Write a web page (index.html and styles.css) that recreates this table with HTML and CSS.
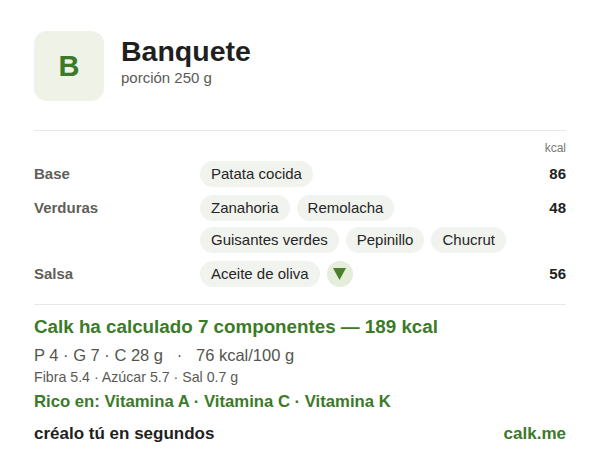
FILE: index.html
```html
<!DOCTYPE html>
<html lang="es">
<head>
    <meta charset="UTF-8">
    <meta name="viewport" content="width=device-width, initial-scale=1.0">
    <title>Banquete - Calk</title>
    <link rel="stylesheet" href="styles.css">
</head>
<body>
    <div class="card">
        <!-- Header -->
        <div class="header">
            <div class="logo">B</div>
            <div class="title-block">
                <h1>Banquete</h1>
                <div class="portion">porción 250 g</div>
            </div>
        </div>

        <!-- Components -->
        <div class="components">
            <div class="kcal-head">kcal</div>

            <div class="row">
                <div class="label">Base</div>
                <div class="chips">
                    <span class="chip">Patata cocida</span>
                </div>
                <div class="kcal">86</div>
            </div>

            <div class="row">
                <div class="label">Verduras</div>
                <div class="chips">
                    <span class="chip">Zanahoria</span>
                    <span class="chip">Remolacha</span>
                    <span class="chip">Guisantes verdes</span>
                    <span class="chip">Pepinillo</span>
                    <span class="chip">Chucrut</span>
                </div>
                <div class="kcal">48</div>
            </div>

            <div class="row">
                <div class="label">Salsa</div>
                <div class="chips">
                    <span class="chip">Aceite de oliva</span>
                    <span class="toggle">
                        <svg width="13" height="12" viewBox="0 0 13 12"><path d="M0 0 L13 0 L6.5 12 Z" fill="#4b7f2c"/></svg>
                    </span>
                </div>
                <div class="kcal">56</div>
            </div>
        </div>

        <!-- Summary -->
        <div class="summary">
            <div class="total">Calk ha calculado 7 componentes — 189 kcal</div>
            <div class="macros">P 4 · G 7 · C 28 g &nbsp; · &nbsp; 76 kcal/100 g</div>
            <div class="extra">Fibra 5.4 · Azúcar 5.7 · Sal 0.7 g</div>
            <div class="rich">Rico en: Vitamina A · Vitamina C · Vitamina K</div>
        </div>

        <div class="footer">
            <span class="cta">créalo tú en segundos</span>
            <span class="brand">calk.me</span>
        </div>
    </div>
</body>
</html>
```

FILE: styles.css
```css
body {
    font-family: "Liberation Sans", Arial, sans-serif;
    background-color: #fff;
    color: #222;
    margin: 0;
    padding: 0;
}
.card {
    width: 532px;
    padding: 31px 34px 0;
}
.header {
    display: flex;
    align-items: center;
    gap: 17px;
    padding-bottom: 29px;
    border-bottom: 1px solid #e8e8e6;
}
.logo {
    width: 70px;
    height: 70px;
    border-radius: 13px;
    background-color: #eef2e7;
    color: #3b7a28;
    font-size: 29px;
    font-weight: bold;
    display: flex;
    align-items: center;
    justify-content: center;
}
.title-block {
    margin-top: -10px;
}
h1 {
    font-size: 28.5px;
    margin: 0;
    line-height: 32px;
    color: #1f1f1f;
}
.portion {
    font-size: 15px;
    color: #5a5a55;
    margin-top: 2px;
    line-height: 18px;
}
.components {
    padding: 10px 0 17px;
    border-bottom: 1px solid #e8e8e6;
}
.kcal-head {
    text-align: right;
    font-size: 12px;
    color: #777;
    line-height: 14px;
    margin-bottom: 6px;
}
.row {
    display: grid;
    grid-template-columns: 166px 1fr 50px;
    align-items: start;
    margin-bottom: 8px;
}
.row:last-child {
    margin-bottom: 0;
}
.label,
.kcal {
    font-size: 15px;
    font-weight: bold;
    line-height: 26px;
}
.label {
    color: #5f5f58;
}
.kcal {
    color: #222;
    text-align: right;
}
.chips {
    display: flex;
    flex-wrap: wrap;
    gap: 6px 7px;
}
.chip {
    display: inline-block;
    height: 26px;
    line-height: 26px;
    padding: 0 11px;
    border-radius: 13px;
    background-color: #f1f3ee;
    font-size: 15px;
    color: #262626;
}
.toggle {
    width: 26px;
    height: 26px;
    border-radius: 50%;
    background-color: #e4eedb;
    display: flex;
    align-items: center;
    justify-content: center;
}
.summary {
    padding-top: 10px;
}
.total {
    font-size: 18.8px;
    font-weight: bold;
    color: #3b7a28;
    line-height: 24px;
}
.macros {
    font-size: 16.5px;
    color: #55554f;
    margin-top: 6px;
    line-height: 20px;
}
.extra {
    font-size: 14.2px;
    color: #5a5a55;
    margin-top: 4px;
    line-height: 16px;
}
.rich {
    font-size: 16.7px;
    font-weight: bold;
    color: #3b7a28;
    margin-top: 7px;
    line-height: 20px;
}
.footer {
    display: flex;
    justify-content: space-between;
    margin-top: 12px;
    font-size: 17px;
    font-weight: bold;
    line-height: 20px;
}
.cta {
    color: #1f1f1f;
}
.brand {
    color: #3b7a28;
}
```
